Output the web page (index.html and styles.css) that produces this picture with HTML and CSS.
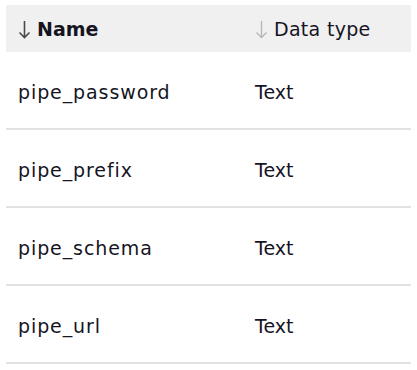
FILE: index.html
```html
<!DOCTYPE html>
<html lang="en">
<head>
  <meta charset="UTF-8">
  <meta name="viewport" content="width=device-width, initial-scale=1.0">
  <title>Pipe variables</title>
  <link rel="stylesheet" href="styles.css">
</head>
<body>
  <div class="vars-table" role="table" aria-label="Pipe variables">
    <!-- Header -->
    <div class="vars-row vars-head" role="row">
      <div class="vars-cell head-cell sorted" role="columnheader">
        <svg class="sort-arrow" width="13" height="19" viewBox="0 0 13 19" aria-hidden="true">
          <path d="M6.5 1 V17.5 M1.5 12.5 L6.5 17.5 L11.5 12.5" fill="none" stroke="currentColor" stroke-width="1.6"/>
        </svg>
        <span>Name</span>
      </div>
      <div class="vars-cell head-cell" role="columnheader">
        <svg class="sort-arrow" width="13" height="19" viewBox="0 0 13 19" aria-hidden="true">
          <path d="M6.5 1 V17.5 M1.5 12.5 L6.5 17.5 L11.5 12.5" fill="none" stroke="currentColor" stroke-width="1.4"/>
        </svg>
        <span>Data type</span>
      </div>
    </div>

    <!-- Rows -->
    <div class="vars-row" role="row">
      <div class="vars-cell var-name" role="cell">pipe_password</div>
      <div class="vars-cell" role="cell">Text</div>
    </div>
    <div class="vars-row" role="row">
      <div class="vars-cell var-name" role="cell">pipe_prefix</div>
      <div class="vars-cell" role="cell">Text</div>
    </div>
    <div class="vars-row" role="row">
      <div class="vars-cell var-name" role="cell">pipe_schema</div>
      <div class="vars-cell" role="cell">Text</div>
    </div>
    <div class="vars-row" role="row">
      <div class="vars-cell var-name" role="cell">pipe_url</div>
      <div class="vars-cell" role="cell">Text</div>
    </div>
  </div>
</body>
</html>
```

FILE: styles.css
```css
:root {
  --text-color: #16151f;
  --head-bg: #f0f0f0;
  --divider: #e2e2e2;
  --col-name: 237px;
}

body {
  margin: 0;
  padding: 5px 6px 0;
  font-family: "DejaVu Sans", "Liberation Sans", sans-serif;
  color: var(--text-color);
  background: white;
}

.vars-table {
  width: 405px;
}

.vars-row {
  display: grid;
  grid-template-columns: var(--col-name) 1fr;
  align-items: center;
  height: 76px;
  border-bottom: 2px solid var(--divider);
}

.vars-cell {
  padding-left: 12px;
  padding-top: 3px;
  font-size: 19px;
}

.var-name {
  letter-spacing: 0.9px;
}

/* Header */
.vars-head {
  height: 47px;
  background: var(--head-bg);
  border-bottom: none;
}

.head-cell {
  display: flex;
  align-items: center;
  gap: 6px;
  padding-top: 0;
  letter-spacing: 0.3px;
}

.sort-arrow {
  color: #b8b8b8;
  margin-top: 1px;
}

.sorted {
  font-weight: 700;
  letter-spacing: 0;
}

.sorted .sort-arrow {
  color: #4a4a4a;
}
```
